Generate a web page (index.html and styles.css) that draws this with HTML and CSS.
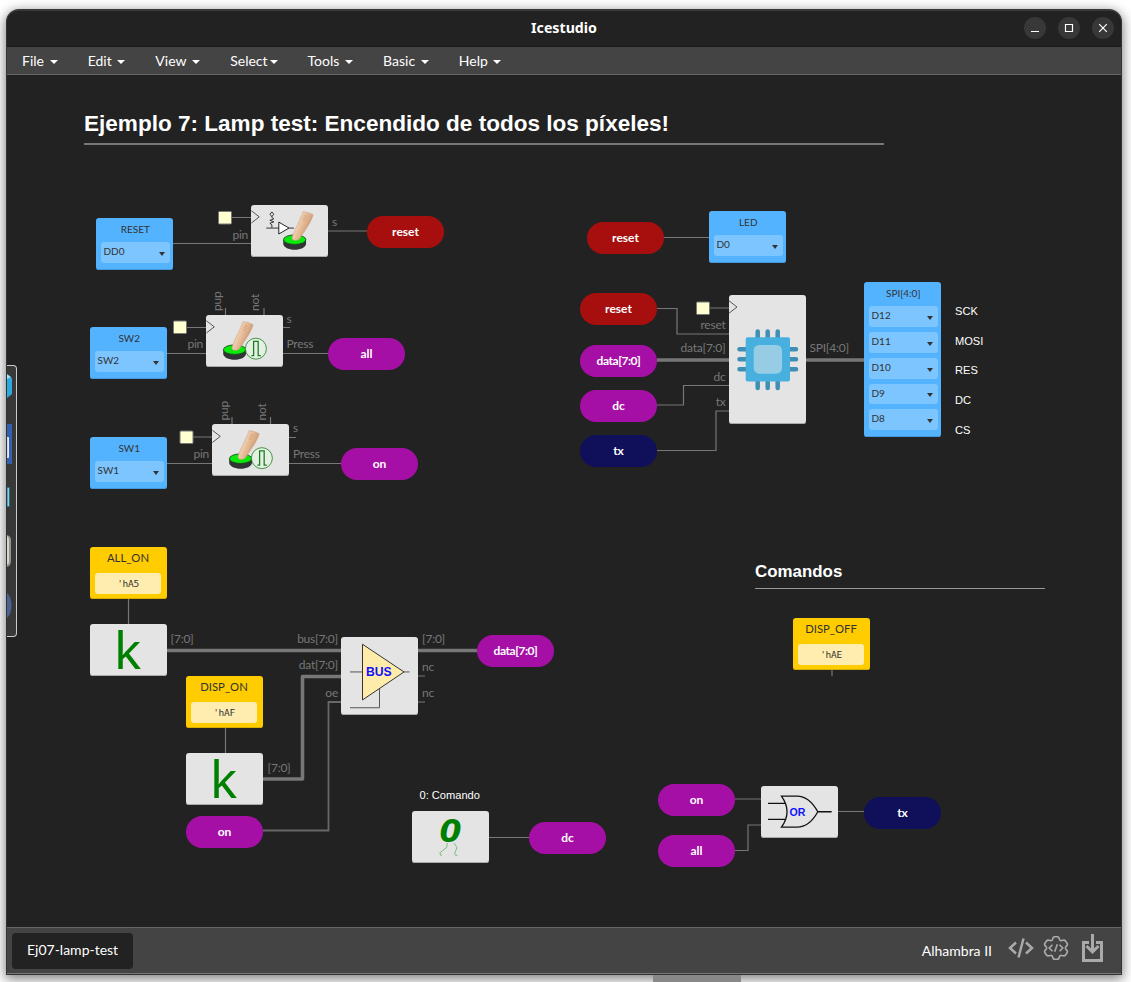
FILE: index.html
```html
<!DOCTYPE html>
<html lang="es">
<head>
<meta charset="utf-8">
<title>Icestudio</title>
<link rel="stylesheet" href="styles.css">
</head>
<body>
<div class="window">
  <header class="titlebar">
    <span class="title">Icestudio</span>
    <div class="controls">
      <span class="control"><svg width="22" height="22"><path d="M7 14.5h8"/></svg></span>
      <span class="control"><svg width="22" height="22"><path d="M7.5 7.5h7v7h-7z"/></svg></span>
      <span class="control"><svg width="22" height="22"><path d="M7.2 7.2l7.6 7.6M14.8 7.2l-7.6 7.6"/></svg></span>
    </div>
  </header>
  <nav class="menu">
    <span class="item">File<i class="caret"></i></span>
    <span class="item">Edit<i class="caret"></i></span>
    <span class="item">View<i class="caret"></i></span>
    <span class="item tight">Select<i class="caret"></i></span>
    <span class="item">Tools<i class="caret"></i></span>
    <span class="item">Basic<i class="caret"></i></span>
    <span class="item">Help<i class="caret"></i></span>
  </nav>
  <main class="canvas">
    <div class="diagram">
      <svg class="wires" width="1131" height="982">
        <g class="wire">
          <path d="M173 243.5H251M231 217.5H251M328 231H367"/>
          <path d="M167 353.5H206M186 327.5H206M225.5 308V315M264 308V315M283 327.5H290M283 353.5H328"/>
          <path d="M167 463.5H212M193 437H212M232 417V424M270.5 417V424M289 437.5H296M289 463.5H341"/>
          <path d="M664 237.5H709M657 308.5H677V334H729M709 308H729M657 405H683.5V385.5H729M657 450.5H716V411H729"/>
          <path d="M128.5 598V624M225.5 727V753M418 676H425M418 702H425M489 837.5H529"/>
          <path d="M735 799H761M735 850.5H748V825H761M838 811.5H864M832 669V676"/>
          <path class="soft" d="M263 830.5H328.5V702H341"/>
        </g>
        <g class="bus">
          <path d="M657 360H729M806 360H864M167 650.5H341M418 650.5H477M263 779H302.5V676.5H341"/>
        </g>
        <g class="clock">
          <rect x="218.5" y="211.5" width="13" height="12.5" rx="1"/>
          <rect x="173.5" y="321" width="13" height="12.5" rx="1"/>
          <rect x="180" y="431" width="13" height="12.5" rx="1"/>
          <rect x="696.5" y="302" width="13" height="12.5" rx="1"/>
        </g>
        <g class="port">
          <text x="332" y="226">s</text>
          <text x="248" y="239" class="end">pin</text>
          <text x="203" y="348" class="end">pin</text>
          <text x="209" y="458" class="end">pin</text>
          <text x="286.5" y="323">s</text>
          <text x="286.5" y="348">Press</text>
          <text x="293" y="432">s</text>
          <text x="293" y="458">Press</text>
          <text transform="translate(220.500 311) rotate(-90)">pup</text>
          <text transform="translate(259 311) rotate(-90)">not</text>
          <text transform="translate(227.500 420.500) rotate(-90)">pup</text>
          <text transform="translate(266 420.500) rotate(-90)">not</text>
          <text x="725.5" y="329" class="end">reset</text>
          <text x="725.5" y="352" class="end">data[7:0]</text>
          <text x="725.5" y="381" class="end">dc</text>
          <text x="725.5" y="406" class="end">tx</text>
          <text x="809.5" y="352">SPI[4:0]</text>
          <text x="170.500" y="643">[7:0]</text>
          <text x="267.500" y="772">[7:0]</text>
          <text x="338" y="643" class="end">bus[7:0]</text>
          <text x="338" y="669" class="end">dat[7:0]</text>
          <text x="338" y="697" class="end">oe</text>
          <text x="422" y="643">[7:0]</text>
          <text x="422" y="671">nc</text>
          <text x="422" y="697">nc</text>
        </g>
      </svg>

      <h1 class="heading main-heading">Ejemplo 7: Lamp test: Encendido de todos los píxeles!</h1>
      <h2 class="heading sub-heading">Comandos</h2>

      <div class="node io n-reset"><span class="name">RESET</span><span class="pin">DD0</span></div>
      <div class="node io n-sw2"><span class="name">SW2</span><span class="pin">SW2</span></div>
      <div class="node io n-sw1"><span class="name">SW1</span><span class="pin">SW1</span></div>
      <div class="node io n-led"><span class="name">LED</span><span class="pin">D0</span></div>
      <div class="node io n-spi"><span class="name">SPI[4:0]</span><span class="pin">D12</span><span class="pin">D11</span><span class="pin">D10</span><span class="pin">D9</span><span class="pin">D8</span></div>

      <div class="node const n-allon"><span class="name">ALL_ON</span><span class="value">'hA5</span></div>
      <div class="node const n-dispon"><span class="name">DISP_ON</span><span class="value">'hAF</span></div>
      <div class="node const n-dispoff"><span class="name">DISP_OFF</span><span class="value">'hAE</span></div>

      <div class="node label red p-reset1">reset</div>
      <div class="node label purple p-all1">all</div>
      <div class="node label purple p-on1">on</div>
      <div class="node label red p-reset2">reset</div>
      <div class="node label red p-reset3">reset</div>
      <div class="node label purple narrow p-data1">data[7:0]</div>
      <div class="node label purple p-dc1">dc</div>
      <div class="node label navy p-tx1">tx</div>
      <div class="node label purple narrow p-data2">data[7:0]</div>
      <div class="node label purple p-on2">on</div>
      <div class="node label purple p-dc2">dc</div>
      <div class="node label purple p-on3">on</div>
      <div class="node label purple p-all2">all</div>
      <div class="node label navy p-tx2">tx</div>

      <svg class="defs" width="0" height="0">
        <defs>
          <linearGradient id="skin" x1="0.1" y1="0.2" x2=".8" y2=".6">
            <stop offset=".2" stop-color="#f8dabd"/><stop offset="1" stop-color="#d09a70"/>
          </linearGradient>
          <g id="press">
            <path d="M-11.500 0V4.500C-11 8-6 10.300 0 10.300S11 8 11.500 4.500V0z" fill="#303434"/>
            <ellipse cx="0" cy="0" rx="11.300" ry="4.800" fill="#0be80b" stroke="#1d4a1d" stroke-width=".9"/>
            <path d="M8.500-28.300Q14-28 18.700-25.200C17-18 9.500-8 5-1C3 1.500-2 1.300-2.700-1.500C-1.500-8 5-18 8.500-28.300z" fill="url(#skin)" stroke="#c79a78" stroke-width=".5"/>
            <path d="M10-24.500l3 1M9-22.500l3 1M8-20.500l3 1" stroke="#b98a66" stroke-width=".5"/>
          </g>
          <g id="pulse" fill="none" stroke="#188018">
            <circle r="10.600" fill="#e6efe6" stroke-width=".8"/>
            <path d="M-4.500 7H-2.300V-7.300H2.300V7H5" stroke-width="1.300"/>
          </g>
          <path id="edge" d="M0-6.200L8 0L0 6.200" fill="none" stroke="#555" stroke-width="1"/>
        </defs>
      </svg>

      <div class="node block b-pull">
        <svg viewBox="251 205 77 52">
          <use href="#edge" x="251" y="217"/>
          <path d="M266 228.300H279M288.700 228.300H294M271.700 228V225l-2-1.500 4-1.500-4-1.500 4-1.500-2-1.500V216M271.700 212l-2 2.500 2 2 2-2z" fill="none" stroke="#222" stroke-width=".9"/>
          <path d="M278.700 222.300V234.300L289 228.300z" fill="#fff" stroke="#222"/>
          <use href="#press" x="294.700" y="240"/>
        </svg>
      </div>
      <div class="node block b-sw2">
        <svg viewBox="206 315 77 52">
          <use href="#edge" x="206" y="327"/><use href="#press" x="234.500" y="350"/><use href="#pulse" x="256" y="349"/>
        </svg>
      </div>
      <div class="node block b-sw1">
        <svg viewBox="212 424 77 52">
          <use href="#edge" x="212" y="436.500"/><use href="#press" x="240.500" y="459"/><use href="#pulse" x="262" y="458.500"/>
        </svg>
      </div>
      <div class="node block b-chip">
        <svg viewBox="729 295 77 129">
          <use href="#edge" x="729" y="307"/>
          <path d="M757.700 331.500V388M767.700 331.500V388M777.700 331.500V388M739.500 349.300H796M739.500 359.300H796M739.500 369.300H796" stroke="#3f8fb5" stroke-width="4.500" stroke-linecap="round"/>
          <rect x="745.700" y="337.300" width="44.300" height="44.300" rx="2" fill="#48b0de"/>
          <rect x="753.700" y="345" width="28.300" height="28.700" rx="5.500" fill="#96cde4"/>
        </svg>
      </div>
      <div class="node block glyph b-k1">k</div>
      <div class="node block glyph b-k2">k</div>
      <div class="node block b-bus">
        <svg viewBox="341 637 77 77">
          <path d="M350 671.700H363M403 671.700H409.500M350 707.500H379.500V688" fill="none" stroke="#555"/>
          <path d="M362.500 644V699.700L404 671.700z" fill="#ffecaa" stroke="#333"/>
          <text x="366" y="676" class="gate bus-text">BUS</text>
        </svg>
      </div>
      <div class="node block b-zero">
        <svg viewBox="412 811 77 52">
          <text x="439.500" y="842" class="zero">0</text>
          <path d="M447.300 843.300L446.700 847.700L439.700 853.300L440.700 855.700H442M454 843.300L457 847.700L454.700 854.300L455.500 855.700H457.500" fill="none" stroke="#7dbb7d"/>
        </svg>
      </div>
      <div class="node block b-or">
        <svg viewBox="761 786 77 52">
          <path d="M767.700 803.500H785.500M767.700 819.700H785.500M818 812H832M781.300 796.200H797C806 796.200 813 803 818 812C813 821 806 827.500 797 827.500H781.300Q792.500 812 781.300 796.200z" fill="none" stroke="#111" stroke-width="1.300"/>
          <text x="789.500" y="816" class="gate or-text">OR</text>
        </svg>
      </div>

      <span class="note t-sck">SCK</span>
      <span class="note t-mosi">MOSI</span>
      <span class="note t-res">RES</span>
      <span class="note t-dc">DC</span>
      <span class="note t-cs">CS</span>
      <span class="note t-cmd">0: Comando</span>
    </div>

    <aside class="dock">
      <svg width="9" height="270" viewBox="7 366 9 270">
        <path d="M7 375l5 3v16l-5 4z" fill="#2da9df"/><path d="M7 374l4 3-4 2z" fill="#a5e2f8"/>
        <path d="M7 424h5v40H7z" fill="#3560ad"/><path d="M7 437.500h1.500v20H7" fill="#c9d5ef" stroke="#fff" stroke-width=".8"/>
        <path d="M7 487.500h2.500v19H7z" fill="#85d2e5" stroke="#266f83"/>
        <path d="M7 535q4 1 4 5v21q0 5-4 6z" fill="#94948c"/><path d="M7 536q2 1 2 5v22l-2 2z" fill="#d5d5cf"/>
        <path d="M7 593c6 5 6 20 0 25z" fill="#4b6390"/>
      </svg>
    </aside>
  </main>
  <footer class="statusbar">
    <span class="tab">Ej07-lamp-test</span>
    <div class="status">
      <span class="board">Alhambra II</span>
      <svg class="icon code" width="26" height="22" viewBox="0 0 26 22"><path d="M8 5.500L2 11l6 5.500M18 5.500L24 11l-6 5.500M15.500 1.500L10.500 20.500"/></svg>
      <svg class="icon gear" width="26" height="26" viewBox="0 0 26 26"><path d="M9.500 4.500Q10 1.800 11.500 1.800H14.500Q16 1.800 16.500 4.500Q17 6 18.800 5.500Q21.500 4.500 22.500 6L24.200 8.500Q25 10 23 11.500Q21.800 13 23 14.500Q25 16 24.200 17.500L22.500 20Q21.500 21.500 18.800 20.500Q17 20 16.500 21.500Q16 24.200 14.500 24.200H11.500Q10 24.200 9.500 21.500Q9 20 7.200 20.500Q4.500 21.500 3.500 20L1.800 17.500Q1 16 3 14.500Q4.200 13 3 11.500Q1 10 1.800 8.500L3.500 6Q4.500 4.500 7.200 5.500Q9 6 9.500 4.500z"/><path d="M9.500 9.800L6.200 13l3.300 3.200M16.500 9.800L19.800 13l-3.300 3.200M14.300 9.300L11.700 16.700"/></svg>
      <svg class="icon save" width="22" height="28" viewBox="0 0 22 28"><path d="M7 8.500H1.500V26.500H19.500V8.500H14M10.500 0V18M4.500 12L10.500 18L16.500 12"/></svg>
    </div>
  </footer>
</div>
<div class="page-thumb"></div>
</body>
</html>
```
FILE: styles.css
```css
* { box-sizing: border-box; }
body {
  margin: 0;
  height: 982px;
  padding: 9px 9px 0 6px;
  background: #fff;
  overflow: hidden;
  font-family: Lato, "Liberation Sans", sans-serif;
}
.window {
  width: 1116px;
  height: 966px;
  display: flex;
  flex-direction: column;
  border: 1px solid #333;
  border-top: 2px solid #393939;
  border-radius: 13px 13px 0 0;
  background: #222;
  overflow: hidden;
  box-shadow: 0 3px 12px 1px rgba(0, 0, 0, .5);
}
.titlebar {
  flex: 0 0 36px;
  display: grid;
  grid-template-columns: 1fr auto 1fr;
  align-items: center;
  padding-bottom: 2px;
  border-bottom: 1px solid #181818;
}
.title {
  grid-column: 2;
  color: #fff;
  font: bold 14.200px "Noto Sans", sans-serif;
}
.controls {
  display: flex;
  justify-content: flex-end;
  gap: 12px;
  padding-right: 7px;
}
.control {
  width: 22px;
  height: 22px;
  border-radius: 50%;
  background: #383838;
}
.control svg { display: block; fill: none; stroke: #fff; stroke-width: 1.2; }
.menu {
  flex: 0 0 28px;
  display: flex;
  align-items: center;
  gap: 30px;
  padding: 0 15px;
  background: #444;
  border-bottom: 1px solid #666;
  color: #fff;
  font-size: 14px;
}
.item { display: flex; align-items: center; gap: 5.700px; }
.tight { gap: 2px; }
.caret {
  border: 4px solid transparent;
  border-top-color: #fff;
  border-bottom: 0;
  margin-top: 2px;
}
.canvas { flex: 1; position: relative; overflow: hidden; }
/* The layer shares the window's outer coordinate space. */
.diagram { position: absolute; left: -7px; top: -75px; width: 1131px; height: 982px; }
.wires { position: absolute; left: 0; top: 0; }
.defs { position: absolute; }
.wire { fill: none; stroke: #777; stroke-width: 1.200; }
.wire .soft { stroke: #686868; stroke-width: 1.800; }
.bus { fill: none; stroke: #777; stroke-width: 3.600; stroke-linejoin: round; }
.clock { fill: #ffffcf; stroke: #777; stroke-width: 1; }
.port { fill: #777; font-size: 12px; letter-spacing: -.250px; }
.end { text-anchor: end; }

.heading {
  position: absolute;
  margin: 0;
  color: #fff;
  font-family: "Liberation Sans", sans-serif;
  font-weight: bold;
  white-space: nowrap;
}
.main-heading { left: 84px; top: 109px; width: 800px; height: 36px; font-size: 22.560px; line-height: 29px; border-bottom: 2px solid #777; }
.sub-heading { left: 755px; top: 560px; width: 290px; height: 29px; font-size: 16.900px; line-height: 23px; border-bottom: 1px solid #999; }

.node { position: absolute; width: 77px; height: 51.500px; border-radius: 3px; }
.io { background: #53b3ff; color: #333; font-size: 10px; display: flex; flex-direction: column; gap: 5px; padding: 4px 3.500px 4px 5px; box-shadow: inset 0 -1px #4598df; }
.io .name { height: 15px; line-height: 14px; text-align: center; }
.io .pin {
  flex: 0 0 20.850px;
  line-height: 19px;
  padding: 0 5px 0 2.500px;
  border-radius: 3px;
  background: #7cc5ff;
  display: flex;
  justify-content: space-between;
}
.io .pin::after {
  content: "";
  align-self: center;
  margin-top: 3px;
  border: 3.200px solid transparent;
  border-top: 4px solid #333;
  border-bottom: 0;
}
.const { background: #fc0; color: #333; font-size: 11.300px; padding: 4px 6px 0 5px; text-align: center; box-shadow: inset 0 -1px #d9ad00; }
.const .name { display: block; height: 22px; line-height: 14px; }
.const .value { display: block; height: 21px; border-radius: 3px; background: #ffedb0; font: 9.500px/21px "DejaVu Sans Mono", monospace; letter-spacing: -.300px; }
.block { background: #e4e4e4; box-shadow: inset 0 -1px #aaa; }
.block svg { display: block; width: 100%; height: 100%; }
.glyph { color: green; font: 51px/50px "Noto Sans", sans-serif; text-align: center; padding-right: 2px; }
.gate { fill: #11f; font-family: "Liberation Sans", sans-serif; font-weight: bold; }
.bus-text { font-size: 12.200px; }
.or-text { font-size: 10.700px; }
.zero { fill: green; font: italic bold 32px "DejaVu Sans", sans-serif; }
.label { height: 32px; border-radius: 16px; color: #fff; font-size: 12px; font-weight: bold; line-height: 32px; text-align: center; }
.narrow { letter-spacing: -.450px; }
.red { background: #a70f0f; }
.purple { background: #a60fa6; }
.navy { background: #0f0f5a; }

.n-reset { left: 96px; top: 218px; }
.n-sw2 { left: 90px; top: 327px; }
.n-sw1 { left: 90px; top: 437px; }
.n-led { left: 709px; top: 211px; }
.n-spi { left: 864px; top: 282px; height: 154.500px; }
.n-allon { left: 90px; top: 547px; }
.n-dispon { left: 186px; top: 676px; }
.n-dispoff { left: 793px; top: 618px; }
.p-reset1 { left: 367px; top: 215.500px; }
.p-all1 { left: 328px; top: 337.500px; }
.p-on1 { left: 341px; top: 447.500px; }
.p-reset2 { left: 587px; top: 221.500px; }
.p-reset3 { left: 580px; top: 292.500px; }
.p-data1 { left: 580px; top: 344.500px; }
.p-dc1 { left: 580px; top: 389.500px; }
.p-tx1 { left: 580px; top: 434.500px; }
.p-data2 { left: 477px; top: 634.500px; }
.p-on2 { left: 186px; top: 815.500px; }
.p-dc2 { left: 529px; top: 821.500px; }
.p-on3 { left: 658px; top: 783.500px; }
.p-all2 { left: 658px; top: 834.500px; }
.p-tx2 { left: 864px; top: 796.500px; }
.b-pull { left: 251px; top: 205px; }
.b-sw2 { left: 206px; top: 315px; }
.b-sw1 { left: 212px; top: 424px; }
.b-chip { left: 729px; top: 295px; height: 129px; }
.b-k1 { left: 90px; top: 624px; }
.b-k2 { left: 186px; top: 753px; }
.b-bus { left: 341px; top: 637px; height: 77.500px; }
.b-zero { left: 412px; top: 811px; }
.b-or { left: 761px; top: 786px; }

.note { position: absolute; color: #fff; font: 11.100px/14px "Liberation Sans", sans-serif; white-space: nowrap; }
.t-sck, .t-mosi, .t-res, .t-dc, .t-cs { left: 955px; }
.t-sck { top: 304px; }
.t-mosi { top: 334px; }
.t-res { top: 363px; }
.t-dc { top: 393px; }
.t-cs { top: 423px; }
.t-cmd { left: 419.500px; top: 788px; }

.dock {
  position: absolute;
  left: 0;
  top: 290px;
  width: 10px;
  height: 272px;
  background: #383838;
  border: 1px solid #ccc;
  border-left: 0;
  border-radius: 0 4px 4px 0;
}
.dock svg { display: block; }
.statusbar {
  flex: 0 0 47px;
  display: flex;
  align-items: center;
  justify-content: space-between;
  padding: 0 17px 2px 5px;
  background: #444;
  border-top: 1px solid #666;
  border-bottom: 1px solid #777;
  color: #fff;
  font-size: 14px;
}
.tab { height: 36px; line-height: 34px; padding: 0 15px; border-radius: 4px; background: #222; margin-top: 3px; }
.status { display: flex; align-items: center; padding-bottom: 3px; }
.board { margin-top: 4px; }
.icon { fill: none; stroke: #aaa; stroke-width: 2.500; }
.code { margin-left: 16px; }
.gear { margin-left: 9px; stroke-width: 1.600; }
.save { margin-left: 13px; stroke-width: 3; }
.page-thumb { width: 88px; height: 7px; margin-left: 647px; background: #888; position: relative; }
```
